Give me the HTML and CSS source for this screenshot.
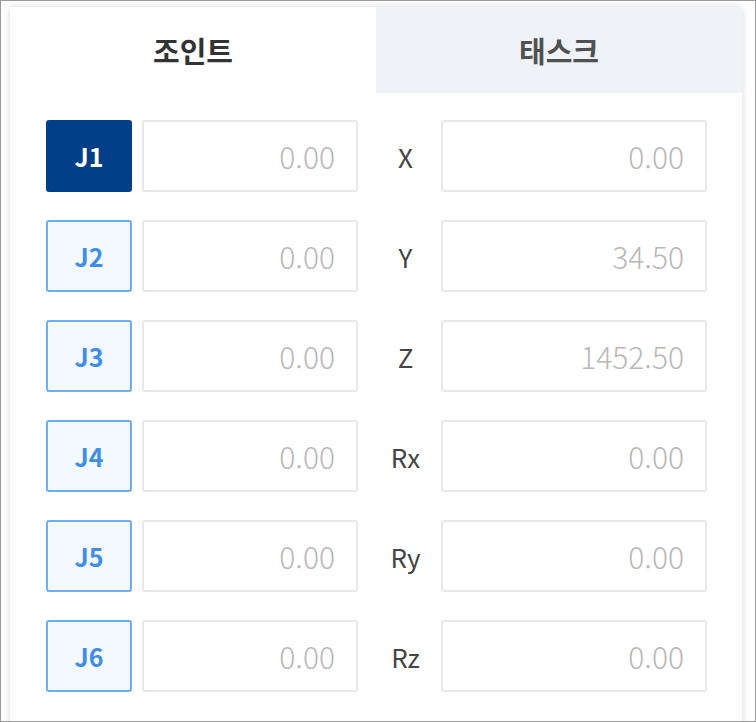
FILE: index.html
```html
<!DOCTYPE html>
<html lang="ko">
<head>
<meta charset="utf-8">
<link rel="stylesheet" href="styles.css">
</head>
<body>
<div class="frame">
  <div class="card">
    <div class="tabs">
      <div class="tab tab-active">조인트</div>
      <div class="tab tab-inactive">태스크</div>
    </div>
    <div class="rows">
      <div class="row">
        <button class="jbtn jbtn-active">J1</button>
        <div class="field">0.00</div>
        <div class="label">X</div>
        <div class="field">0.00</div>
      </div>
      <div class="row">
        <button class="jbtn">J2</button>
        <div class="field">0.00</div>
        <div class="label">Y</div>
        <div class="field">34.50</div>
      </div>
      <div class="row">
        <button class="jbtn">J3</button>
        <div class="field">0.00</div>
        <div class="label">Z</div>
        <div class="field">1452.50</div>
      </div>
      <div class="row">
        <button class="jbtn">J4</button>
        <div class="field">0.00</div>
        <div class="label">Rx</div>
        <div class="field">0.00</div>
      </div>
      <div class="row">
        <button class="jbtn">J5</button>
        <div class="field">0.00</div>
        <div class="label">Ry</div>
        <div class="field">0.00</div>
      </div>
      <div class="row">
        <button class="jbtn">J6</button>
        <div class="field">0.00</div>
        <div class="label">Rz</div>
        <div class="field">0.00</div>
      </div>
    </div>
  </div>
</div>
</body>
</html>
```

FILE: styles.css
```css
* { box-sizing: border-box; }
html, body { margin: 0; padding: 0; background: #ffffff; }
body {
  font-family: "Noto Sans CJK KR", "Noto Sans", sans-serif;
}
.frame {
  width: 756px;
  height: 722px;
  border: 1px solid #9a9a9a;
  overflow: hidden;
  background: #ffffff;
  padding: 6px 0 0 9px;
}
.card {
  width: 732px;
  height: 760px;
  background: #ffffff;
  box-shadow: 0 0 7px rgba(0, 0, 0, 0.16);
}
.tabs {
  display: flex;
  height: 86px;
}
.tab {
  flex: 1;
  display: flex;
  align-items: center;
  justify-content: center;
  font-size: 29px;
  font-weight: 700;
}
.tab-active {
  background: #ffffff;
  color: #333333;
}
.tab-inactive {
  background: #eff3f8;
  color: #505050;
}
.rows {
  display: flex;
  flex-direction: column;
  gap: 28px;
  padding: 27px 35px 0 36px;
}
.row {
  display: flex;
  align-items: center;
  height: 72px;
}
.jbtn {
  width: 86px;
  height: 72px;
  margin: 0 10px 0 0;
  padding: 0;
  border: 2px solid #6eadf4;
  border-radius: 3px;
  background: #f4f8ff;
  color: #3f8ee8;
  font-family: "Noto Sans CJK KR", "Noto Sans", sans-serif;
  font-size: 25px;
  font-weight: 700;
}
.jbtn-active {
  background: #033f88;
  border-color: #033f88;
  color: #ffffff;
}
.field {
  height: 72px;
  border: 2px solid #e8e8e8;
  border-radius: 3px;
  display: flex;
  align-items: center;
  justify-content: flex-end;
  padding-right: 21px;
  font-size: 30px;
  font-weight: 300;
  color: #b8b8b8;
}
.row .field:nth-child(2) { width: 216px; }
.row .field:nth-child(4) { width: 266px; }
.label {
  width: 83px;
  padding-left: 12px;
  text-align: center;
  font-size: 26px;
  color: #444444;
}
```
